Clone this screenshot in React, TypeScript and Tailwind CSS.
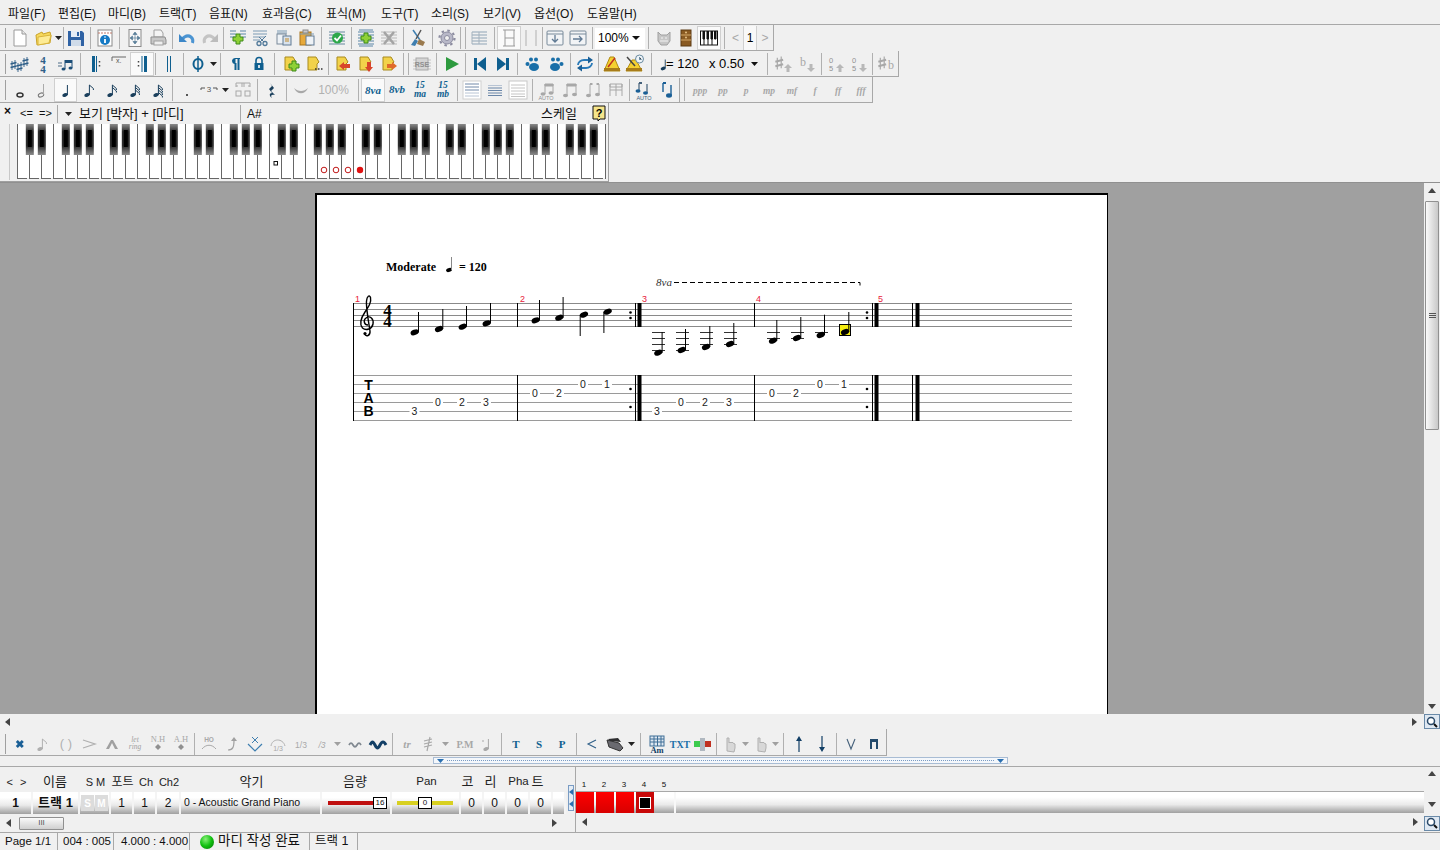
import type { ReactNode } from "react";

const blue = "#0f5f8f";
const serif = "'Liberation Serif', serif";
const sans = "'Liberation Sans', sans-serif";

// five thin lines, used by the staff style icons
function Lines({ c = "#5a86a8", x1 = 2, x2 = 18 }: { c?: string; x1?: number; x2?: number }) {
  return <path d={`M${x1} 4H${x2}M${x1} 7H${x2}M${x1} 10H${x2}M${x1} 13H${x2}M${x1} 16H${x2}`} stroke={c} fill="none" />;
}

function Plus({ x = 11, y = 11 }: { x?: number; y?: number }) {
  return <path d={`M${x - 2} ${y - 5}h4v3h3v4h-3v3h-4v-3h-3v-4h3z`} fill="#8fd136" stroke="#3c8a1a" />;
}

function Note({ x = 10, y = 15, c = "#555", h = 10, w = 1 }: { x?: number; y?: number; c?: string; h?: number; w?: number }) {
  return (
    <g>
      <ellipse cx={x} cy={y} rx="2.8" ry="1.9" fill={c} transform={`rotate(-20 ${x} ${y})`} />
      <path d={`M${x + 2.4} ${y}v-${h}`} stroke={c} strokeWidth={w} />
    </g>
  );
}

function Flag({ c = "#f2d24a", children }: { c?: string; children?: ReactNode }) {
  return (
    <g>
      <path d="M4 3h8l3 5-2 2v6H4z" fill={c} stroke="#a88a1e" />
      {children}
    </g>
  );
}

function Tail({ n, c = "#555", x = 12.4 }: { n: number; c?: string; x?: number }) {
  const d = [];
  for (let i = 0; i < n; i++) d.push(`M${x} ${5 + i * 2.5}l4 3.5v1.5`);
  return <path d={d.join("")} stroke={c} fill="none" />;
}

function Sharp({ x, y, c = "#2f5f88", s = 1 }: { x: number; y: number; c?: string; s?: number }) {
  return (
    <g transform={`translate(${x} ${y}) scale(${s})`}>
      <path d="M1 -4V5M4 -5V4" stroke={c} strokeWidth=".9" />
      <path d="M-.5 -1L5.500 -2.500M-.5 2.500L5.500 1" stroke={c} strokeWidth="1.500" />
    </g>
  );
}

function Dyn({ t }: { t: string }) {
  return <text x="10" y="13.5" textAnchor="middle" fontSize="9.5" fontStyle="italic" fontWeight="bold" fontFamily={serif} fill="#a8a8a8">{t}</text>;
}

function Dim({ t, y = 14, s = 10, c = blue, b = true, i = false }: { t: string; y?: number; s?: number; c?: string; b?: boolean; i?: boolean }) {
  return <text x="10" y={y} textAnchor="middle" fontSize={s} fontWeight={b ? "bold" : "normal"} fontStyle={i ? "italic" : "normal"} fontFamily={serif} fill={c}>{t}</text>;
}

const icons: Record<string, ReactNode> = {
  new: <><path d="M4 2h8l4 4v12H4z" fill="#fff" stroke="#9a9a9a" /><path d="M12 2v4h4" fill="#e8e8e8" stroke="#9a9a9a" /></>,
  open: <><path d="M3 7l6-3 1 2 7-2 1 4-1 7-13 2z" fill="#f7d95c" stroke="#caa32b" /><path d="M5 9l13-2-2 8-11 2z" fill="#fdeb94" stroke="#d8b43c" /></>,
  save: <><path d="M2 3h14l2 2v13H2z" fill="#2f62a4" /><rect x="5" y="3" width="9" height="6" fill="#e4ecf6" /><rect x="11" y="4" width="2" height="4" fill="#2f62a4" /><rect x="5" y="12" width="10" height="6" fill="#cfdbe9" /></>,
  info: <><rect x="3" y="2" width="14" height="16" fill="#fff" stroke="#8a8a8a" /><path d="M3 5h14" stroke="#c07b6a" strokeDasharray="2 1" /><circle cx="10" cy="12" r="5" fill="#1479c4" /><path d="M10 8.5v1M10 11v4" stroke="#fff" strokeWidth="1.8" /></>,
  fit: <><rect x="4" y="1.5" width="12" height="17" fill="#f8f8f8" stroke="#8a8a8a" /><path d="M10 5v10M6 10h8M10 4l-2 2.5h4zM10 16l-2-2.5h4zM5 10l2.500-2v4zM15 10l-2.500-2v4z" stroke="#5a7f9a" fill="#5a7f9a" strokeWidth=".7" /></>,
  print: <><path d="M6 2h7l2 3v4H6z" fill="#f4f4f4" stroke="#a0a0a0" /><path d="M3 9h14l1 3v4H3z" fill="#c8c8c8" stroke="#8e8e8e" /><rect x="6" y="13" width="9" height="4" fill="#eee" stroke="#a0a0a0" /></>,
  undo: <><path d="M15.500 15c1.500-5-3-9-8-6L5 11" stroke="#4b94d2" strokeWidth="3" fill="none" /><path d="M2 6v8h8z" fill="#3d87c8" /></>,
  redo: <><path d="M4.500 15c-1.500-5 3-9 8-6l2.500 2" stroke="#c4c4c4" strokeWidth="3" fill="none" /><path d="M18 6v8h-8z" fill="#bcbcbc" /></>,
  addbar: <><path d="M2 3h6M2 6h6M2 9h5M12 3h6M12 6h6M15 9h3" stroke="#5a86a8" /><Plus x={10} y={11} /></>,
  cut: <><path d="M2 3h14M2 6h14M2 9h12M2 12h7" stroke="#7a9ab4" /><circle cx="8" cy="15.500" r="2" fill="none" stroke="#527a9a" strokeWidth="1.300" /><circle cx="14" cy="15.500" r="2" fill="none" stroke="#527a9a" strokeWidth="1.300" /><path d="M9 14l6-6M13 14L8 9" stroke="#527a9a" /></>,
  copy: <><path d="M3 3h10M3 5h10" stroke="#7a9ab4" /><rect x="3" y="6" width="9" height="10" fill="#eef2f6" stroke="#7a8a9a" /><rect x="9" y="8" width="8" height="9" fill="#d9e2ec" stroke="#607a94" /><path d="M11 11h4M11 13h4" stroke="#c08a2a" /></>,
  paste: <><rect x="3" y="4" width="11" height="13" fill="#e7a93a" stroke="#a8741c" /><rect x="6" y="2" width="5" height="3" fill="#c9c9c9" stroke="#888" /><rect x="9" y="8" width="8" height="9" fill="#eef2f6" stroke="#607a94" /><path d="M3 6h14" stroke="#7a9ab4" /></>,
  check: <><Lines c="#64889e" /><circle cx="10.500" cy="10" r="5.500" fill="#2da84a" /><path d="M7.500 10l2.500 2.500 4-5" stroke="#fff" strokeWidth="1.800" fill="none" /></>,
  addmid: <><Lines c="#5a86a8" /><path d="M3 2h14M3 18h14" stroke="#5a86a8" /><Plus x={10} y={10} /></>,
  delmid: <><Lines c="#b8b8b8" /><path d="M5 4l10 12M15 4L5 16" stroke="#a4a4a4" strokeWidth="2.500" /></>,
  broom: <><path d="M5 2l7 10" stroke="#3f7fb0" strokeWidth="1.500" /><path d="M13 2l-5 9" stroke="#555" strokeWidth="1.500" /><path d="M7 11l-4 6 4 1 3-5z" fill="#3f7fb0" /><path d="M11 11l6 3-2 4-6-2z" fill="#9a7a4e" /></>,
  gear: <><circle cx="10" cy="10" r="6" fill="#b8b8c8" stroke="#8c8ca0" strokeWidth="1" /><circle cx="10" cy="10" r="7.500" fill="none" stroke="#8c8ca0" strokeWidth="2.200" strokeDasharray="2.500 3.400" /><circle cx="10" cy="10" r="2.500" fill="#f0f0f0" stroke="#8c8ca0" /></>,
  rows: <><path d="M2 4h15M2 7h15M2 10h15M2 13h15M2 16h15" stroke="#8fa4b6" /><path d="M9 4v12M2 4v12" stroke="#a4b2be" /></>,
  hbox: <><path d="M4 2h12M4 18h12M6 2v16M15 2v16M6 10h9" stroke="#9a9a9a" fill="none" /></>,
  bar: <><path d="M5 2v16M15 2v16" stroke="#b0b0b0" /></>,
  indown: <><rect x="2" y="3" width="16" height="14" rx="1" fill="#f2f4f6" stroke="#788a9a" /><path d="M2 6h16" stroke="#788a9a" /><path d="M10 7v7M7 11l3 3 3-3" stroke="#607a94" strokeWidth="1.300" fill="none" /></>,
  inright: <><rect x="2" y="3" width="16" height="14" rx="1" fill="#f2f4f6" stroke="#788a9a" /><path d="M2 6h16" stroke="#788a9a" /><path d="M5 11h9M11 8l3 3-3 3" stroke="#607a94" strokeWidth="1.300" fill="none" /></>,
  cat: <><path d="M4 4l3 3h6l3-3v9l-3 4H7l-3-4z" fill="#c6c6c6" stroke="#a0a0a0" /><path d="M7 10h2M11 10h2M6 13h8" stroke="#f2f2f2" /></>,
  wood: <><rect x="5" y="2" width="10" height="16" fill="#8a5a22" stroke="#5c3a12" /><path d="M5 7h10M5 12h10" stroke="#d4a868" /><circle cx="10" cy="9.500" r="1" fill="#e4c084" /><circle cx="10" cy="4.500" r="1" fill="#e4c084" /></>,
  piano: <><rect x="1.500" y="3" width="17" height="14" fill="#fff" stroke="#111" /><path d="M4 3v8h1.500V3M8 3v8h1.500V3M12 3v8h1.500V3M15.500 3v8H17V3" fill="#111" stroke="#111" /><path d="M5 11v6M9 11v6M13 11v6" stroke="#111" /></>,
  sharps: <><Sharp x={1} y={11} /><Sharp x={7} y={13} /><Sharp x={13} y={8} /></>,
  time: <><text x="10" y="10" textAnchor="middle" fontSize="11" fontWeight="bold" fill="#2f5f88" fontFamily={serif}>4</text><text x="10" y="18.500" textAnchor="middle" fontSize="11" fontWeight="bold" fill="#2f5f88" fontFamily={serif}>4</text></>,
  tune: <><path d="M2 9h4M2 12h4" stroke="#4c6c88" /><path d="M9 6h7v3H9z" fill="#1d4f78" /><path d="M9 6v9M16 6v8" stroke="#1d4f78" /><ellipse cx="7.500" cy="15" rx="2" ry="1.500" fill="#1d4f78" /><ellipse cx="14.500" cy="14" rx="2" ry="1.500" fill="#1d4f78" /></>,
  repopen: <><rect x="6" y="2" width="3" height="16" fill={blue} /><path d="M10.500 2v16" stroke={blue} /><path d="M13.500 7v1.500M13.500 11v1.500" stroke="#444" strokeWidth="1.500" /></>,
  volta: <><path d="M3 7V3h14" stroke="#666" fill="none" /><text x="7" y="9" fontSize="7" fill="#555" fontFamily={sans}>x.</text></>,
  repclose: <><rect x="12" y="2" width="3" height="16" fill={blue} /><path d="M10 2v16" stroke={blue} /><path d="M6.500 7v1.500M6.500 11v1.500" stroke="#444" strokeWidth="1.500" /></>,
  dbl: <><path d="M8.500 2v16M11.500 2v16" stroke={blue} /></>,
  coda: <><ellipse cx="10" cy="10" rx="4.500" ry="5" fill="none" stroke={blue} strokeWidth="2" /><path d="M10 2v16" stroke={blue} strokeWidth="1.500" /></>,
  pilcrow: <><path d="M12.500 4v12M9.500 9v7" stroke={blue} strokeWidth="2" /><path d="M6 6.500a3 3 0 013-2.500h5v1H9.500v5A3.500 3.500 0 016 6.500z" fill={blue} /></>,
  lock: <><path d="M7 9V6.500a3 3 0 016 0V9" stroke={blue} strokeWidth="1.600" fill="none" /><rect x="5.500" y="9" width="9" height="7" fill={blue} /><rect x="9.200" y="11" width="1.600" height="3" fill="#fff" /></>,
  flagadd: <><Flag /><Plus x={13} y={12} /></>,
  flagmore: <><Flag /><path d="M11 15h1.500M14 15h1.500M17 15h1.500" stroke="#333" strokeWidth="1.500" /></>,
  flagl: <><Flag /><path d="M6 12l5-4v2h6v4h-6v2z" fill="#d8442a" /></>,
  flagd: <><Flag /><path d="M13 18l-4-5h2V8h4v5h2z" fill="#d8442a" /></>,
  flagr: <><Flag /><path d="M18 12l-5-4v2H8v4h5v2z" fill="#e06a2a" /></>,
  rse: <><path d="M1 6h18M1 9h18M1 12h18M1 15h18" stroke="#c4c4c4" /><rect x="4" y="4" width="12" height="12" fill="#d4d4d4" stroke="#a8a8a8" /><text x="10" y="12.500" textAnchor="middle" fontSize="7" fontWeight="bold" fill="#8e8e8e" fontFamily={sans}>RSE</text></>,
  play: <path d="M4 3l13 7-13 7z" fill="#2d9a3e" />,
  first: <><rect x="4" y="4" width="3" height="12" fill={blue} /><path d="M16 3v14L7 10z" fill={blue} /></>,
  last: <><rect x="13" y="4" width="3" height="12" fill={blue} /><path d="M4 3v14l9-7z" fill={blue} /></>,
  paw: <><ellipse cx="11" cy="13" rx="5" ry="4" fill="#1a6fa8" /><circle cx="4.500" cy="10" r="2" fill="#1a6fa8" /><circle cx="8" cy="5.500" r="2" fill="#1a6fa8" /><circle cx="13" cy="5.500" r="2" fill="#1a6fa8" /></>,
  paw2: <><ellipse cx="9" cy="13" rx="5" ry="4" fill="#1a6fa8" /><circle cx="15.500" cy="10" r="2" fill="#1a6fa8" /><circle cx="12" cy="5.500" r="2" fill="#1a6fa8" /><circle cx="7" cy="5.500" r="2" fill="#1a6fa8" /></>,
  loop: <><path d="M3 11a6 5 0 016-5h6" stroke="#2a7ab8" strokeWidth="1.800" fill="none" /><path d="M17 9a6 5 0 01-6 5H5" stroke="#2a7ab8" strokeWidth="1.800" fill="none" /><path d="M13 2.500l5 3.500-5 3.500zM7 10.500L2 14l5 3.500z" fill="#1a5f96" /></>,
  metro: <><path d="M8 3h4l6 14H2z" fill="#f4d030" stroke="#b08a10" /><rect x="2" y="14" width="16" height="3" fill="#a87c18" /><path d="M6 13L13 4" stroke="#c03020" strokeWidth="1.500" /></>,
  metroc: <><path d="M7 6h4l6 11H1z" fill="#f4d030" stroke="#b08a10" /><rect x="1" y="14" width="16" height="3" fill="#a87c18" /><path d="M2 3l8 9" stroke="#444" strokeWidth="1.500" /><circle cx="14.500" cy="5" r="4" fill="#eef4f8" stroke="#6a8aa0" /><path d="M14.500 3v2.500h2" stroke="#6a8aa0" /></>,
  upsh: <><Sharp x={2} y={9} c="#a8a8a8" s={1.300} /><path d="M14 10l4 4h-2.500v4h-3v-4H10z" fill="#b8b8b8" /></>,
  downfl: <><text x="6" y="12" textAnchor="middle" fontSize="12" fill="#a8a8a8" fontFamily={serif}>b</text><path d="M14 18l4-4h-2.500v-4h-3v4H10z" fill="#b8b8b8" /></>,
  upnum: <><text x="5" y="8.500" textAnchor="middle" fontSize="7.500" fill="#909090" fontFamily={sans}>0</text><text x="5" y="16.500" textAnchor="middle" fontSize="7.500" fill="#909090" fontFamily={sans}>5</text><path d="M14 10l4 4h-2.500v4h-3v-4H10z" fill="#b8b8b8" /></>,
  downnum: <><text x="5" y="8.500" textAnchor="middle" fontSize="7.500" fill="#909090" fontFamily={sans}>0</text><text x="5" y="16.500" textAnchor="middle" fontSize="7.500" fill="#909090" fontFamily={sans}>5</text><path d="M14 18l4-4h-2.500v-4h-3v4H10z" fill="#b8b8b8" /></>,
  enh: <><Sharp x={2} y={9} c="#a8a8a8" s={1.300} /><text x="14" y="15" textAnchor="middle" fontSize="12" fill="#a8a8a8" fontFamily={serif}>b</text></>,
  whole: <ellipse cx="10" cy="15" rx="3" ry="2" fill="none" stroke="#333" strokeWidth="1.500" />,
  half: <><ellipse cx="8" cy="15" rx="2.800" ry="1.900" fill="none" stroke="#777" transform="rotate(-20 8 15)" /><path d="M10.500 14.500V4" stroke="#aaa" /></>,
  quarter: <Note x={9} y={15} c="#1a3f5c" />,
  eighth: <><Note x={8} y={15} c="#1a3f5c" /><Tail n={1} c="#1a3f5c" x={10.400} /></>,
  sixteenth: <><Note x={8} y={15} c="#1a3f5c" /><Tail n={2} c="#1a3f5c" x={10.400} /></>,
  n32: <><Note x={8} y={15} c="#1a3f5c" /><Tail n={3} c="#1a3f5c" x={10.400} /></>,
  n64: <><Note x={8} y={15} c="#1a3f5c" /><Tail n={4} c="#1a3f5c" x={10.400} /></>,
  dot: <circle cx="10" cy="15" r="1" fill="#222" />,
  triplet: <><path d="M2 10V8h4M14 8h4v2" stroke="#555" fill="none" /><text x="10" y="12" textAnchor="middle" fontSize="8" fill="#555" fontFamily={sans}>3</text></>,
  sm: <><path d="M3 3h14M3 6h2M15 6h2M3 3v4M9 3v4M11 3v4M17 3v4" stroke="#a8a8a8" fill="none" /><rect x="3" y="11" width="5" height="5" fill="none" stroke="#a8a8a8" /><rect x="12" y="11" width="5" height="5" fill="none" stroke="#a8a8a8" /></>,
  rest: <path d="M8 3l4 5-3 3 4 4c-3-1-5 0-3 3-3-2-3-5 0-5l-3-4 3-3z" fill="#1a3f5c" />,
  tie: <path d="M3 8c3 7 11 7 14 0-4 4-10 4-14 0z" fill="#a8a8a8" />,
  voice8va: <Dim t="8va" s={11} y={14} i />,
  voice8vb: <Dim t="8vb" s={11} y={13} i />,
  m15a: <><Dim t="15" y={8} s={9.500} i /><Dim t="ma" y={17} s={9.500} i /></>,
  m15b: <><Dim t="15" y={8} s={9.500} i /><Dim t="mb" y={17} s={9.500} i /></>,
  al1: <><rect x="1" y="1" width="18" height="18" fill="#fff" stroke="#d0d0d0" /><path d="M3 4h14M3 7h14M3 10h14" stroke="#7088a8" /><path d="M3 13h14M3 16h14" stroke="#b8c4d4" /></>,
  al2: <><path d="M3 8h14M3 10.500h14M3 13h14M3 15.500h14" stroke="#6a86a8" /><path d="M3 5.500h14" stroke="#b8c4d4" /></>,
  al3: <><rect x="1" y="1" width="18" height="18" fill="#fff" stroke="#c8c8c8" /><path d="M3 5h14M3 8h14M3 11h14M3 14h14M3 16.500h14" stroke="#c4c4c4" /></>,
  beamauto: <><path d="M8 4h8v2H8zM8 4v10M16 4v9" stroke="#a8a8a8" fill="#a8a8a8" /><ellipse cx="6" cy="14" rx="2.500" ry="1.800" fill="#a8a8a8" /><ellipse cx="14" cy="13" rx="2.500" ry="1.800" fill="#a8a8a8" /><text x="9" y="20" textAnchor="middle" fontSize="5.500" fill="#909090" fontFamily={sans}>AUTO</text></>,
  beam: <><path d="M7 4h9v2H7zM7 4v11M16 4v10" stroke="#a8a8a8" fill="#a8a8a8" /><ellipse cx="5.500" cy="15.500" rx="2.500" ry="1.800" fill="#a8a8a8" /><ellipse cx="14.500" cy="14.500" rx="2.500" ry="1.800" fill="#a8a8a8" /></>,
  unbeam: <><path d="M7 4v11M16 4v10" stroke="#a8a8a8" /><path d="M7 4h2.500M16 4h-2.500" stroke="#a8a8a8" strokeWidth="2" /><ellipse cx="5.500" cy="15.500" rx="2.500" ry="1.800" fill="#a8a8a8" /><ellipse cx="14.500" cy="14.500" rx="2.500" ry="1.800" fill="#a8a8a8" /></>,
  beamsplit: <><path d="M4 4h12v3H4zM4 4v12M10 4v12M16 4v12M4 10h12" stroke="#a8a8a8" fill="none" /></>,
  stemauto: <><path d="M5 3v8M13 4v9" stroke="#44607a" strokeWidth="1.200" /><path d="M5 3h3" stroke="#44607a" strokeWidth="2" /><ellipse cx="4" cy="11" rx="2.500" ry="1.800" fill="#1a5f96" /><ellipse cx="11.500" cy="13" rx="2.500" ry="1.800" fill="#1a5f96" /><text x="10" y="20" textAnchor="middle" fontSize="5.500" fill="#44607a" fontFamily={sans}>AUTO</text></>,
  stem: <><path d="M6 3v9M14 5v10" stroke="#1a5f96" strokeWidth="1.400" /><path d="M6 3h3" stroke="#1a5f96" strokeWidth="2" /><ellipse cx="12" cy="15.500" rx="3" ry="2.200" fill="#1a5f96" /></>,
  ghost: <path d="M7 8.500l2 2 2-2 2 2-2 2 2 2-2 2-2-2-2 2-2-2 2-2-2-2z" fill="#1a5f96" transform="translate(.800 -2.500)" />,
  grace: <><Note x={7} y={15} c="#b0b0b0" /><Tail n={1} c="#b0b0b0" x={9.400} /></>,
  paren: <text x="10" y="14" textAnchor="middle" fontSize="13" fill="#b0b0b0" fontFamily={sans}>( )</text>,
  accent: <path d="M4 6l12 4-12 4" stroke="#b0b0b0" strokeWidth="1.300" fill="none" />,
  marc: <path d="M4 15l5-9h2l5 9h-3l-3-6-3 6z" fill="#a0a0a0" />,
  letring: <><text x="10" y="8" textAnchor="middle" fontSize="7.500" fontStyle="italic" fill="#a0a0a0" fontFamily={serif}>let</text><text x="10" y="15" textAnchor="middle" fontSize="7.500" fontStyle="italic" fill="#a0a0a0" fontFamily={serif}>ring</text></>,
  nh: <><text x="10" y="8" textAnchor="middle" fontSize="8.500" fill="#a8a8a8" fontFamily={serif}>N.H</text><path d="M10 10l3 3-3 3-3-3z" fill="#909090" /></>,
  ah: <><text x="10" y="8" textAnchor="middle" fontSize="8.500" fill="#a8a8a8" fontFamily={serif}>A.H</text><path d="M10 10l3 3-3 3-3-3z" fill="#909090" /></>,
  ho: <><text x="10" y="8" textAnchor="middle" fontSize="6.500" fontWeight="bold" fill="#a8a8a8" fontFamily={sans}>HO</text><path d="M3 15c4-5 10-5 14 0" stroke="#a8a8a8" fill="none" /></>,
  bendup: <><path d="M6 16c5 0 6-3 6-10" stroke="#a0a0a0" strokeWidth="1.200" fill="none" /><path d="M12 3l3 4H9z" fill="#a0a0a0" /></>,
  deadx: <><path d="M7 3l6 6M13 3L7 9" stroke="#3f7fb0" /><path d="M3 10l7 7 7-7" stroke="#3f7fb0" fill="none" strokeWidth="1.200" /></>,
  slide13: <><path d="M3 12c1-8 12-8 14 0" stroke="#b0b0b0" fill="none" /><text x="10" y="17" textAnchor="middle" fontSize="7" fill="#a8a8a8" fontFamily={sans}>1/3</text></>,
  ot13: <text x="10" y="14" textAnchor="middle" fontSize="8.500" fill="#a8a8a8" fontFamily={sans}>1/3</text>,
  ot3: <text x="10" y="14" textAnchor="middle" fontSize="8.500" fontStyle="italic" fill="#a8a8a8" fontFamily={sans}>/3</text>,
  wave: <path d="M4 11c1.500-2.500 2.500-2.500 4 0s2.500 2.500 4 0 2.500-2.500 4 0" stroke="#808890" strokeWidth="1.800" fill="none" />,
  wavebold: <path d="M2 11c2-4 3-4 5 0s3 4 5 0 4-4 6 0" stroke="#123f66" strokeWidth="3" fill="none" />,
  tr: <text x="10" y="14" textAnchor="middle" fontSize="11" fontStyle="italic" fontWeight="bold" fill="#a8a8a8" fontFamily={serif}>tr</text>,
  trem: <path d="M12 3l-3 14M6 7l8-2M6 10l8-2M6 13l8-2" stroke="#a8a8a8" strokeWidth="1.200" />,
  pm: <text x="10" y="14" textAnchor="middle" fontSize="10" fontWeight="bold" fill="#a8a8a8" fontFamily={serif}>P.M</text>,
  vib: <><Note x={8} y={15} c="#a8a8a8" /><path d="M4 7h2" stroke="#a8a8a8" /></>,
  t: <Dim t="T" s={11} y={14} />,
  s: <Dim t="S" s={11} y={14} />,
  p: <Dim t="P" s={11} y={14} />,
  cresc: <path d="M14 6L6 10l8 4" stroke="#2f5f88" strokeWidth="1.100" fill="none" />,
  pedal: <><path d="M2 6l12 3 4 5-3 3-11-4z" fill="#6a6a70" stroke="#333" /><path d="M3 5l10-1 3 4-11-1z" fill="#2e2e30" /></>,
  chord: <><rect x="3" y="2" width="14" height="10" fill="#dfe8f2" stroke="#3f6f96" /><path d="M7 2v10M10.500 2v10M14 2v10M3 5h14M3 8h14" stroke="#3f6f96" /><text x="10" y="19" textAnchor="middle" fontSize="8.500" fontWeight="bold" fill="#123f66" fontFamily={serif}>Am</text></>,
  txt: <text x="10" y="14" textAnchor="middle" fontSize="10" fontWeight="bold" fill="#1a6fa8" fontFamily={serif}>TXT</text>,
  mix: <><rect x="1" y="7" width="6" height="6" fill="#3ccb4e" /><rect x="7" y="4" width="5" height="13" fill="#b0b8c0" /><rect x="12" y="7" width="6" height="6" fill="#c03020" /></>,
  hand: <path d="M7 17V9h0V4h2v5l1-1 1 1 1-1 1 1 2 1v4l-1 4z" fill="#d8d8d8" stroke="#b0b0b0" />,
  up: <><path d="M10 18V4" stroke="#123f66" strokeWidth="1.200" /><path d="M10 2l3 5H7z" fill="#123f66" /></>,
  down: <><path d="M10 2v14" stroke="#123f66" strokeWidth="1.200" /><path d="M10 18l3-5H7z" fill="#123f66" /></>,
  vee: <path d="M6 5l4 10 4-10" stroke="#44607a" strokeWidth="1.100" fill="none" />,
  pick: <path d="M6 15V5h8v10h-2V8H8v7z" fill="#234a6c" />,
};

function Ico({ n, s = 20 }: { n: string; s?: number }) {
  return (
    <svg width={s} height={s} viewBox="0 0 20 20" className="block overflow-visible">
      {icons[n]}
    </svg>
  );
}

function B({ i, w = "w-[23px]", sel }: { i: string; w?: string; sel?: boolean }) {
  return (
    <div className={`${w} h-full shrink-0 flex items-center justify-center ${sel ? "bg-[#fafafa] border border-[#d0d0d0]" : ""}`}>
      <Ico n={i} />
    </div>
  );
}

function Dd({ w = "w-[8px]", c = "#222" }: { w?: string; c?: string }) {
  return (
    <div className={`${w} h-full shrink-0 flex items-center justify-center`}>
      <svg width="7" height="4" viewBox="0 0 7 4"><path d="M0 0h7L3.500 4z" fill={c} /></svg>
    </div>
  );
}

function Sep({ w = "w-[6px]" }: { w?: string }) {
  return (
    <div className={`${w} h-full shrink-0 flex items-center justify-center`}>
      <div className="w-px h-[22px] bg-[#b0b0b0]" />
    </div>
  );
}

function Grip() {
  return (
    <div className="w-[8px] h-full shrink-0 flex items-center pl-[5px]">
      <div className="w-px h-[20px] bg-[#a0a0a0]" />
    </div>
  );
}

function Row({ children }: { children: ReactNode }) {
  return <div className="flex h-[26px] w-fit border-b border-r border-[#a8a8a8] pt-[1px]">{children}</div>;
}

function Toolbar1() {
  return (
    <Row>
      <Grip /><B i="new" /><B i="open" /><Dd /><Sep w="w-[2px]" /><B i="save" /><Sep /><B i="info" /><Sep w="w-[7px]" /><B i="fit" /><B i="print" /><Sep /><B i="undo" /><B i="redo" /><Sep w="w-[5px]" />
      <B i="addbar" /><B i="cut" /><B i="copy" /><B i="paste" /><Sep w="w-[7px]" /><B i="check" /><Sep /><B i="addmid" /><B i="delmid" /><Sep /><B i="broom" /><Sep /><B i="gear" /><Sep w="w-[5px]" /><Sep w="w-[5px]" />
      <B i="rows" /><Sep /><B i="hbox" w="w-[24px]" sel /><B i="bar" w="w-[20px]" /><Sep w="w-[2px]" /><B i="indown" /><B i="inright" /><Sep />
      <div className="w-[50px] h-[21px] self-center shrink-0 bg-white flex items-center justify-between pl-[3px] pr-[5px] text-[12px]">100%<svg width="8" height="4" viewBox="0 0 8 4"><path d="M0 0h8L4 4z" fill="#111" /></svg></div>
      <Sep w="w-[7px]" /><B i="cat" /><B i="wood" w="w-[22px]" /><B i="piano" w="w-[24px]" sel /><Sep w="w-[7px]" />
      <div className="w-[15px] h-full flex items-center justify-center text-[12px] text-[#a8a8a8]">&lt;</div>
      <div className="w-[14px] h-full flex items-center justify-center text-[12px] bg-[#f8f8f8] border-x border-[#d0d0d0]">1</div>
      <div className="w-[16px] h-full flex items-center justify-center text-[12px] text-[#a8a8a8]">&gt;</div>
    </Row>
  );
}

function Toolbar2() {
  return (
    <Row>
      <Grip /><B i="sharps" /><B i="time" /><B i="tune" /><Sep w="w-[7px]" /><B i="repopen" /><B i="volta" /><B i="repclose" w="w-[24px]" sel /><Sep w="w-[3px]" /><B i="dbl" /><Sep /><B i="coda" /><Dd /><Sep /><div className="w-px" /><B i="pilcrow" /><B i="lock" /><Sep w="w-[9px]" />
      <B i="flagadd" /><B i="flagmore" /><Sep /><B i="flagl" /><B i="flagd" /><B i="flagr" /><Sep /><Sep w="w-[4px]" /><B i="rse" /><Sep w="w-[7px]" /><B i="play" /><Sep w="w-[5px]" /><B i="first" /><B i="last" /><Sep w="w-[7px]" /><B i="paw" /><B i="paw2" /><Sep /><B i="loop" /><Sep w="w-[4px]" /><B i="metro" /><B i="metroc" w="w-[24px]" /><Sep w="w-[8px]" />
      <div className="w-[108px] h-full shrink-0 flex items-center text-[13px] whitespace-nowrap">
        <Ico n="quarter" s={18} /><span className="-ml-[7px]">= 120</span><span className="ml-[10px]">x 0.50</span><svg className="ml-[7px]" width="7" height="4" viewBox="0 0 7 4"><path d="M0 0h7L3.500 4z" fill="#111" /></svg>
      </div>
      <Sep w="w-[9px]" /><B i="upsh" /><B i="downfl" /><Sep /><B i="upnum" /><B i="downnum" /><Sep w="w-[5px]" /><B i="enh" />
    </Row>
  );
}

function Toolbar3() {
  return (
    <Row>
      <Grip /><B i="whole" /><B i="half" /><B i="quarter" sel /><B i="eighth" /><B i="sixteenth" /><B i="n32" /><B i="n64" /><Sep /><B i="dot" /><B i="triplet" w="w-[21px]" /><Dd w="w-[12px]" /><B i="sm" /><Sep /><B i="rest" /><Sep w="w-[7px]" /><B i="tie" w="w-[22px]" />
      <div className="w-[43px] h-full shrink-0 flex items-center justify-center text-[12px] text-[#b0b0b0]">100%</div>
      <Sep /><B i="voice8va" w="w-[24px]" sel /><B i="voice8vb" /><B i="m15a" /><B i="m15b" /><Sep /><B i="al1" /><B i="al2" /><B i="al3" /><Sep /><B i="beamauto" /><B i="beam" /><B i="unbeam" /><B i="beamsplit" /><Sep w="w-[5px]" /><B i="stemauto" /><B i="stem" /><div className="w-[2px] border-r border-[#a8a8a8]" /><Sep w="w-[8px]" />
      <DynBtn t="ppp" /><DynBtn t="pp" /><DynBtn t="p" /><DynBtn t="mp" /><DynBtn t="mf" /><DynBtn t="f" /><DynBtn t="ff" /><DynBtn t="fff" />
    </Row>
  );
}

function DynBtn({ t }: { t: string }) {
  return (
    <div className="w-[23px] h-full shrink-0 flex items-center justify-center">
      <svg width="20" height="20" viewBox="0 0 20 20" className="block"><Dyn t={t} /></svg>
    </div>
  );
}

function Keyboard() {
  const whites = Array.from({ length: 49 }, (_, k) => k);
  // black keys sit on the boundary after C, D, F, G, A of each octave
  const blacks = whites.filter((k) => k > 0 && [1, 2, 4, 5, 6].includes(k % 7));
  return (
    <svg width="600" height="56" viewBox="9 124 600 56" className="block ml-[9px]">
      <defs>
        <linearGradient id="bk" x1="0" y1="0" x2="0" y2="1">
          <stop offset="0" stopColor="#8c8c8c" />
          <stop offset=".25" stopColor="#2c2c2c" />
          <stop offset=".7" stopColor="#2c2c2c" />
          <stop offset="1" stopColor="#8c8c8c" />
        </linearGradient>
      </defs>
      <path d="M9.500 124V180" stroke="#c8c8c8" />
      <rect x="17" y="124" width="588" height="54" fill="#fff" />
      {whites.map((k) => <path key={k} d={`M${17.5 + k * 12} 124V178`} stroke="#666" />)}
      <path d="M17 178.500H605" stroke="#666" strokeDasharray="10 2" fill="none" />
      <path d="M605.500 124V179" stroke="#666" fill="none" />
      {blacks.map((k) => (
        <g key={k}>
          <rect x={13.800 + k * 12} y="124" width="8" height="31" fill="url(#bk)" />
          <rect x={15.800 + k * 12} y="130" width="4" height="17" fill="#000" />
        </g>
      ))}
      <rect x="274" y="161.500" width="3.500" height="3.500" fill="#fff" stroke="#111" />
      {[324, 336, 348].map((x) => <circle key={x} cx={x} cy="170" r="2.800" fill="#fff" stroke="#c01818" />)}
      <circle cx="360" cy="170" r="3.200" fill="#e01010" />
    </svg>
  );
}

function PianoPanel() {
  return (
    <div className="w-[609px] h-[79px] shrink-0 border-r border-b border-[#a0a0a0]">
      <div className="flex items-center h-[21px] text-[13px] text-[#111]">
        <span className="w-[20px] pl-[4px] text-[12px] font-bold leading-none -mt-[5px]">×</span>
        <span className="w-[19px] text-[11px] whitespace-nowrap">&lt;=</span>
        <span className="w-[18px] text-[11px] whitespace-nowrap">=&gt;</span>
        <div className="w-px h-[18px] bg-[#a8a8a8]" />
        <Dd w="w-[21px]" />
        <span className="w-[161px] whitespace-nowrap">보기 [박자] + [마디]</span>
        <div className="w-px h-[18px] bg-[#a8a8a8]" />
        <span className="ml-[6px] w-[294px] text-[12px]">A#</span>
        <span className="w-[50px] whitespace-nowrap">스케일</span>
        <svg width="16" height="17" viewBox="0 0 16 17">
          <path d="M2 1h12v13H9l-2 2v-2H2z" fill="#f6e58a" stroke="#111" />
          <text x="8" y="12" textAnchor="middle" fontSize="11" fontWeight="bold" fontFamily={sans}>?</text>
        </svg>
      </div>
      <Keyboard />
    </div>
  );
}

const q = (x: number, y: number, top: number) => (
  <g key={`${x}-${y}`}>
    <ellipse cx={x} cy={y} rx="4.300" ry="2.700" fill="#000" transform={`rotate(-22 ${x} ${y})`} />
    <path d={`M${x + 3.800} ${y}V${top}`} stroke="#000" />
  </g>
);

const qd = (x: number, y: number, bottom: number) => (
  <g key={`${x}-${y}`}>
    <ellipse cx={x} cy={y} rx="4.300" ry="2.700" fill="#000" transform={`rotate(-22 ${x} ${y})`} />
    <path d={`M${x - 3.800} ${y}V${bottom}`} stroke="#000" />
  </g>
);

const tabNotes: [number, number, string][] = [
  [414.500, 411.500, "3"], [438, 402.500, "0"], [462, 402.500, "2"], [486, 402.500, "3"],
  [535, 393.500, "0"], [559, 393.500, "2"], [583, 384.500, "0"], [607, 384.500, "1"],
  [657, 411.500, "3"], [681, 402.500, "0"], [705, 402.500, "2"], [729, 402.500, "3"],
  [772, 393.500, "0"], [796, 393.500, "2"], [820, 384.500, "0"], [844, 384.500, "1"],
];

function Score() {
  const staff = [303.500, 309.500, 315.500, 320.500, 326.500];
  const tab = [375.500, 384.500, 393.500, 402.500, 411.500, 420.500];
  const ledger: [number, number[]][] = [
    [658, [332, 338, 344, 350]], [682, [332, 338, 344, 350]], [706, [332, 338, 344]], [730, [332, 338, 344]],
    [773, [332, 338]], [797, [332, 338]], [821, [332]],
  ];
  return (
    <svg width="790" height="240" viewBox="317 195 790 240" className="block">
      <text x="386" y="271" fontSize="12" fontWeight="bold" fontFamily={serif}>Moderate</text>
      <ellipse cx="449" cy="270" rx="3" ry="2" fill="#000" transform="rotate(-22 449 270)" />
      <path d="M451.500 270V257" stroke="#888" />
      <text x="459" y="271" fontSize="12" fontWeight="bold" fontFamily={serif}>= 120</text>
      <text x="656" y="286" fontSize="11" fontStyle="italic" fontFamily={serif} fill="#333">8va</text>
      <path d="M674 282.500H860V285.500" stroke="#000" strokeDasharray="5 3" fill="none" />

      {staff.map((y) => <path key={y} d={`M353 ${y}H1072`} stroke="#8a8a8a" />)}
      {tab.map((y) => <path key={y} d={`M353 ${y}H1072`} stroke="#9a9a9a" />)}
      <path d="M353.500 303V421" stroke="#000" />
      {[517.500, 754.500].map((x) => <path key={x} d={`M${x} 303V327M${x} 375V421`} stroke="#000" />)}
      {[[635.500, 639.500], [872.500, 876.500], [912.500, 917.500]].map(([a, b]) => (
        <g key={a}>
          <path d={`M${a} 303V327M${a} 375V421`} stroke="#000" />
          <path d={`M${b} 303V327M${b} 375V421`} stroke="#000" strokeWidth="4" />
        </g>
      ))}
      {[630.500, 867].map((x) => (
        <g key={x}>
          <circle cx={x} cy="312.500" r="1.300" /><circle cx={x} cy="318" r="1.300" />
          <circle cx={x} cy="389" r="1.300" /><circle cx={x} cy="407" r="1.300" />
        </g>
      ))}
      {[["1", 355], ["2", 520], ["3", 642], ["4", 756], ["5", 878]].map(([t, x]) => (
        <text key={t} x={x} y="302" fontSize="9" fill="#e8203a" fontFamily={sans}>{t}</text>
      ))}

      <path d="M368 325C364 325 363 320 366 318C370 315 374 319 373 324C372 329 366 331 362.500 328C359 324 361 318 365 312C369 306 371.500 302 370.500 297.500C369.500 294.500 367 296 366.500 301C366 307 369 325 370 331C370.500 336 366 337 364.500 334" stroke="#000" strokeWidth="1.400" fill="none" />
      <circle cx="365" cy="333.500" r="1.600" />
      <text x="387.500" y="316" textAnchor="middle" fontSize="17" fontWeight="bold" fontFamily={serif}>4</text>
      <text x="387.500" y="327" textAnchor="middle" fontSize="17" fontWeight="bold" fontFamily={serif}>4</text>
      <g fontFamily={sans} fontWeight="bold" fontSize="14" textAnchor="middle">
        <text x="368.500" y="390">T</text>
        <text x="368.500" y="402.700">A</text>
        <text x="368.500" y="415.700">B</text>
      </g>

      {ledger.map(([x, ys]) => ys.map((y) => <path key={`${x}${y}`} d={`M${x - 6} ${y + 0.500}H${x + 7}`} stroke="#333" />))}
      <rect x="839.500" y="324.500" width="11" height="11" fill="#f6ee10" stroke="#000" />
      {[q(414.700, 332.300, 312), q(439, 329, 309), q(462.700, 326.700, 306), q(486.700, 323.300, 303)]}
      {[q(535.700, 320.300, 300), q(559.300, 317.700, 297), qd(584, 314.700, 336), qd(607.700, 311.700, 333)]}
      {[q(658.300, 352.700, 332), q(681.700, 350, 329), q(706, 347, 326), q(730, 344, 323)]}
      {[q(773, 340.700, 320), q(797, 338, 317), q(820.700, 335, 314.700), q(845, 332, 312)]}

      {tabNotes.map(([x, y, t]) => (
        <g key={`${x}`}>
          <rect x={x - 5} y={y - 5} width="10" height="10" fill="#fff" />
          <text x={x} y={y + 3.800} textAnchor="middle" fontSize="10.500" fill="#222" fontFamily={sans}>{t}</text>
        </g>
      ))}
    </svg>
  );
}

function Arrow({ d }: { d: "up" | "down" | "left" | "right" }) {
  const p = { up: "M0 5L4 0l4 5z", down: "M0 0l4 5 4-5z", left: "M5 0L0 4l5 4z", right: "M0 0l5 4-5 4z" }[d];
  return <svg width="8" height="8" viewBox="0 0 8 8" className="shrink-0"><path d={p} fill="#444" /></svg>;
}

function ZoomBox() {
  return (
    <div className="w-[16px] h-[15px] shrink-0 bg-[#dfe8f2] border border-[#6a8aa8] flex items-center justify-center">
      <svg width="12" height="12" viewBox="0 0 12 12"><circle cx="5" cy="5" r="3.500" fill="#fff" stroke="#2a4a6a" strokeWidth="1.500" /><path d="M8 8l3 3" stroke="#111" strokeWidth="2" /></svg>
    </div>
  );
}

function Thumb({ w }: { w: string }) {
  return (
    <div className={`${w} h-[13px] border border-[#909090] rounded-[1px] bg-linear-to-b from-[#fafafa] to-[#d0d0d0] flex items-center justify-center text-[8px] leading-none text-[#555]`}>III</div>
  );
}

function VScroll() {
  return (
    <div className="w-[16px] shrink-0 bg-[#f0f0f0] flex flex-col items-center pt-[5px]">
      <Arrow d="up" />
      <div className="mt-[5px] w-[14px] h-[229px] border border-[#909090] rounded-[1px] bg-linear-to-r from-[#fafafa] to-[#c8c8c8] flex flex-col items-center justify-center gap-px">
        <div className="w-[7px] h-px bg-[#555]" /><div className="w-[7px] h-px bg-[#555]" /><div className="w-[7px] h-px bg-[#555]" />
      </div>
      <div className="flex-1" />
      <div className="pb-[2px]"><Arrow d="down" /></div>
    </div>
  );
}

function BottomBar() {
  return (
    <div className="flex h-[27px] w-fit shrink-0 border-r border-b border-[#a8a8a8] pt-[3px]">
      <Grip /><B i="ghost" /><B i="grace" /><B i="paren" /><B i="accent" /><B i="marc" /><B i="letring" /><B i="nh" /><B i="ah" /><Sep w="w-[5px]" />
      <B i="ho" /><B i="bendup" /><B i="deadx" /><B i="slide13" /><B i="ot13" /><B i="ot3" w="w-[20px]" /><Dd w="w-[11px]" c="#a0a0a0" /><B i="wave" /><B i="wavebold" /><Sep />
      <B i="tr" /><B i="trem" w="w-[20px]" /><Dd w="w-[15px]" c="#a0a0a0" /><B i="pm" /><B i="vib" /><Sep w="w-[5px]" />
      <B i="t" /><B i="s" /><B i="p" /><Sep w="w-[7px]" /><B i="cresc" /><B i="pedal" w="w-[24px]" /><Dd /><Sep w="w-[10px]" />
      <B i="chord" /><B i="txt" /><B i="mix" /><Sep w="w-[5px]" /><B i="hand" w="w-[21px]" /><Dd w="w-[10px]" c="#a0a0a0" /><B i="hand" w="w-[21px]" /><Dd w="w-[9px]" c="#a0a0a0" /><Sep w="w-[7px]" />
      <B i="up" /><B i="down" /><Sep /><B i="vee" /><B i="pick" /><div className="w-px" />
    </div>
  );
}

function Splitter() {
  return (
    <div className="h-[11px] shrink-0 pl-[433px] pt-[1px] border-b border-[#a8a8a8]">
      <div className="w-[575px] h-[7px] bg-[#f4f7fb] border border-[#a8bcd4] flex items-center justify-between px-[3px]">
        <svg width="7" height="4" viewBox="0 0 7 4"><path d="M0 0h7L3.500 4z" fill="#2a6fb0" /></svg>
        <div className="flex-1 mx-[3px] border-t border-dotted border-[#7a9cc4]" />
        <svg width="7" height="4" viewBox="0 0 7 4"><path d="M0 0h7L3.500 4z" fill="#2a6fb0" /></svg>
      </div>
    </div>
  );
}

const rowGradient = "bg-linear-to-b from-white from-25% via-[#eaeaea] via-60% to-[#a0a0a0]";
const cellClass = `h-full shrink-0 flex items-center justify-center border-r-2 border-[#f4f4f4] ${rowGradient}`;

function TrackPanel() {
  return (
    <div className="flex h-[66px] shrink-0 border-b border-[#a8a8a8]">
      <div className="w-[566px] shrink-0 flex flex-col">
        <div className="flex h-[25px] items-center text-[12px] text-[#222] whitespace-nowrap pt-[5px]">
          <div className="w-[33px] flex justify-around px-[3px] text-[11px]"><span>&lt;</span><span>&gt;</span></div>
          <div className="w-[47px] text-center text-[13px] pr-[3px]">이름</div>
          <div className="w-[31px] text-[11px] text-center">S M</div>
          <div className="w-[23px] text-center">포트</div>
          <div className="w-[23px] text-center text-[11px] pl-[1px]">Ch</div>
          <div className="w-[24px] text-center text-[11px]">Ch2</div>
          <div className="w-[141px] text-center text-[13px]">악기</div>
          <div className="w-[70px] text-center text-[13px] pr-[4px]">음량</div>
          <div className="w-[69px] text-center text-[11.500px]">Pan</div>
          <div className="w-[23px] text-center text-[13px] pr-[10px]">코</div>
          <div className="w-[23px] text-center text-[13px] -ml-[5px]">리</div>
          <div className="w-[23px] text-center text-[11.500px] ml-[5px]">Pha</div>
          <div className="w-[23px] text-center text-[13px] pr-[8px]">트</div>
        </div>
        <div className="flex h-[22px] text-[12px] text-[#111]">
          <div className={`${cellClass} w-[33px] font-bold`}>1</div>
          <div className={`${cellClass} w-[47px] font-bold text-[13px] whitespace-nowrap`}>트랙 1</div>
          <div className={`${cellClass} w-[31px] text-[10px] font-bold text-white gap-px`}>
            <span className="w-[13px] h-[16px] bg-[#dcdcdc] flex items-center justify-center">S</span>
            <span className="w-[13px] h-[16px] bg-[#dcdcdc] flex items-center justify-center">M</span>
          </div>
          <div className={`${cellClass} w-[23px]`}>1</div>
          <div className={`${cellClass} w-[23px]`}>1</div>
          <div className={`${cellClass} w-[24px]`}>2</div>
          <div className={`${cellClass} w-[141px] !justify-start pl-[3px] text-[10.500px] whitespace-nowrap`}>0 - Acoustic Grand Piano</div>
          <div className={`${cellClass} w-[70px] !justify-start pl-[6px]`}>
            <div className="w-[45px] h-[4px] bg-[#c01010]" />
            <div className="w-[14px] h-[12px] bg-white border border-black text-[8px] flex items-center justify-center leading-none">16</div>
          </div>
          <div className={`${cellClass} w-[69px] !justify-start pl-[5px]`}>
            <div className="w-[21px] h-[4px] bg-[#d8d020]" />
            <div className="w-[14px] h-[12px] bg-white border border-black text-[8px] flex items-center justify-center leading-none">0</div>
            <div className="w-[21px] h-[4px] bg-[#d8d020]" />
          </div>
          <div className={`${cellClass} w-[23px]`}>0</div>
          <div className={`${cellClass} w-[23px]`}>0</div>
          <div className={`${cellClass} w-[23px]`}>0</div>
          <div className={`${cellClass} w-[23px]`}>0</div>
          <div className={`${cellClass} w-[13px] border-r-0`} />
        </div>
        <div className="flex h-[18px] items-center pl-[6px] pr-[6px]">
          <Arrow d="left" />
          <div className="ml-[5px]"><Thumb w="w-[45px]" /></div>
          <div className="flex-1" />
          <Arrow d="right" />
        </div>
      </div>
      <div className="w-[10px] shrink-0 flex flex-col items-center border-r border-[#a8a8a8] pt-[18px]">
        <div className="w-[6px] h-[26px] bg-[#e4ecf4] border border-[#7a9cc4] flex flex-col items-center justify-around">
          <svg width="4" height="6" viewBox="0 0 4 6"><path d="M4 0L0 3l4 3z" fill="#2a6fb0" /></svg>
          <svg width="4" height="6" viewBox="0 0 4 6"><path d="M4 0L0 3l4 3z" fill="#2a6fb0" /></svg>
        </div>
      </div>
      <div className="flex-1 flex flex-col min-w-0">
        <div className="h-[25px] flex items-end pb-[1px] text-[8px] leading-[10px] text-[#111] border-b border-[#a8a8a8]">
          {["1", "2", "3", "4", "5"].map((t) => <div key={t} className="w-[20px] text-center -translate-x-[2px]">{t}</div>)}
        </div>
        <div className={`h-[21px] flex ${rowGradient}`}>
          <div className="w-[18px] bg-linear-to-b from-[#ff0000] to-[#d80000]" />
          <div className="w-[18px] ml-[2px] bg-linear-to-b from-[#ff0000] to-[#d80000]" />
          <div className="w-[18px] ml-[2px] bg-linear-to-b from-[#ff0000] to-[#d80000]" />
          <div className="w-[18px] ml-[2px] bg-[#c80808] flex items-center justify-center">
            <div className="w-[12px] h-[12px] bg-black border border-white" />
          </div>
          <div className="w-[20px] ml-[2px] border-r-2 border-[#f8f8f8]" />
        </div>
        <div className="h-[18px] flex items-center pl-[6px] pr-[3px]">
          <Arrow d="left" /><div className="flex-1" /><Arrow d="right" />
        </div>
      </div>
      <div className="w-[16px] shrink-0 flex flex-col items-center">
        <div className="h-[47px] w-full flex flex-col items-center justify-between py-[4px]"><Arrow d="up" /><Arrow d="down" /></div>
        <div className="h-[18px] flex items-center"><ZoomBox /></div>
      </div>
    </div>
  );
}

function StatusBar() {
  return (
    <div className="flex h-[17px] shrink-0 items-stretch text-[11.500px] text-[#111] whitespace-nowrap">
      <div className="w-[58px] pl-[5px] flex items-center border-r border-[#a8a8a8]">Page 1/1</div>
      <div className="w-[56px] pl-[5px] flex items-center border-r border-[#a8a8a8]">004 : 005</div>
      <div className="w-[76px] pl-[7px] flex items-center border-r border-[#a8a8a8]">4.000 : 4.000</div>
      <div className="w-[120px] pl-[10px] flex items-center gap-[4px] border-r border-[#a8a8a8] text-[13.500px]">
        <div className="w-[14px] h-[14px] shrink-0 rounded-full bg-radial-[at_40%_30%] from-[#8af07a] via-[#10c010] to-[#067006]" />
        마디 작성 완료
      </div>
      <div className="w-[48px] pl-[5px] flex items-center border-r border-[#a8a8a8] text-[12.500px]">트랙 1</div>
    </div>
  );
}

const menus: [string, string][] = [
  ["파일(F)", "w-[50px]"], ["편집(E)", "w-[50px]"], ["마디(B)", "w-[51px]"], ["트랙(T)", "w-[50px]"],
  ["음표(N)", "w-[53px]"], ["효과음(C)", "w-[64px]"], ["표식(M)", "w-[55px]"], ["도구(T)", "w-[50px]"],
  ["소리(S)", "w-[52px]"], ["보기(V)", "w-[51px]"], ["옵션(O)", "w-[53px]"], ["도움말(H)", "w-[70px]"],
];

export default function App() {
  return (
    <div className="w-[1440px] h-[850px] overflow-hidden flex flex-col bg-[#f0f0f0] text-black" style={{ fontFamily: "'Liberation Sans', 'Noto Sans CJK KR', sans-serif" }}>
      {/* Menu */}
      <div className="h-[25px] shrink-0 flex items-center pl-[8px] pt-[4px] text-[12px] text-[#111] border-b border-[#a8a8a8] whitespace-nowrap">
        {menus.map(([m, w]) => (
          <span key={m} className={w}>{m}</span>
        ))}
      </div>

      {/* Toolbars */}
      <Toolbar1 />
      <Toolbar2 />
      <Toolbar3 />
      <PianoPanel />

      {/* Score */}
      <div className="h-[532px] shrink-0 flex border-t border-[#909090]">
        <div className="flex-1 bg-[#a0a0a0] overflow-hidden pl-[315px] pt-[10px]">
          <div className="w-[793px] h-[600px] bg-white border-t-2 border-l-2 border-r border-black">
            <Score />
          </div>
        </div>
        <VScroll />
      </div>

      <div className="h-[15px] shrink-0 flex items-center pl-[5px]">
        <Arrow d="left" />
        <div className="flex-1" />
        <Arrow d="right" />
        <div className="ml-[4px]"><ZoomBox /></div>
      </div>

      <BottomBar />
      <Splitter />
      <TrackPanel />
      <StatusBar />
    </div>
  );
}
